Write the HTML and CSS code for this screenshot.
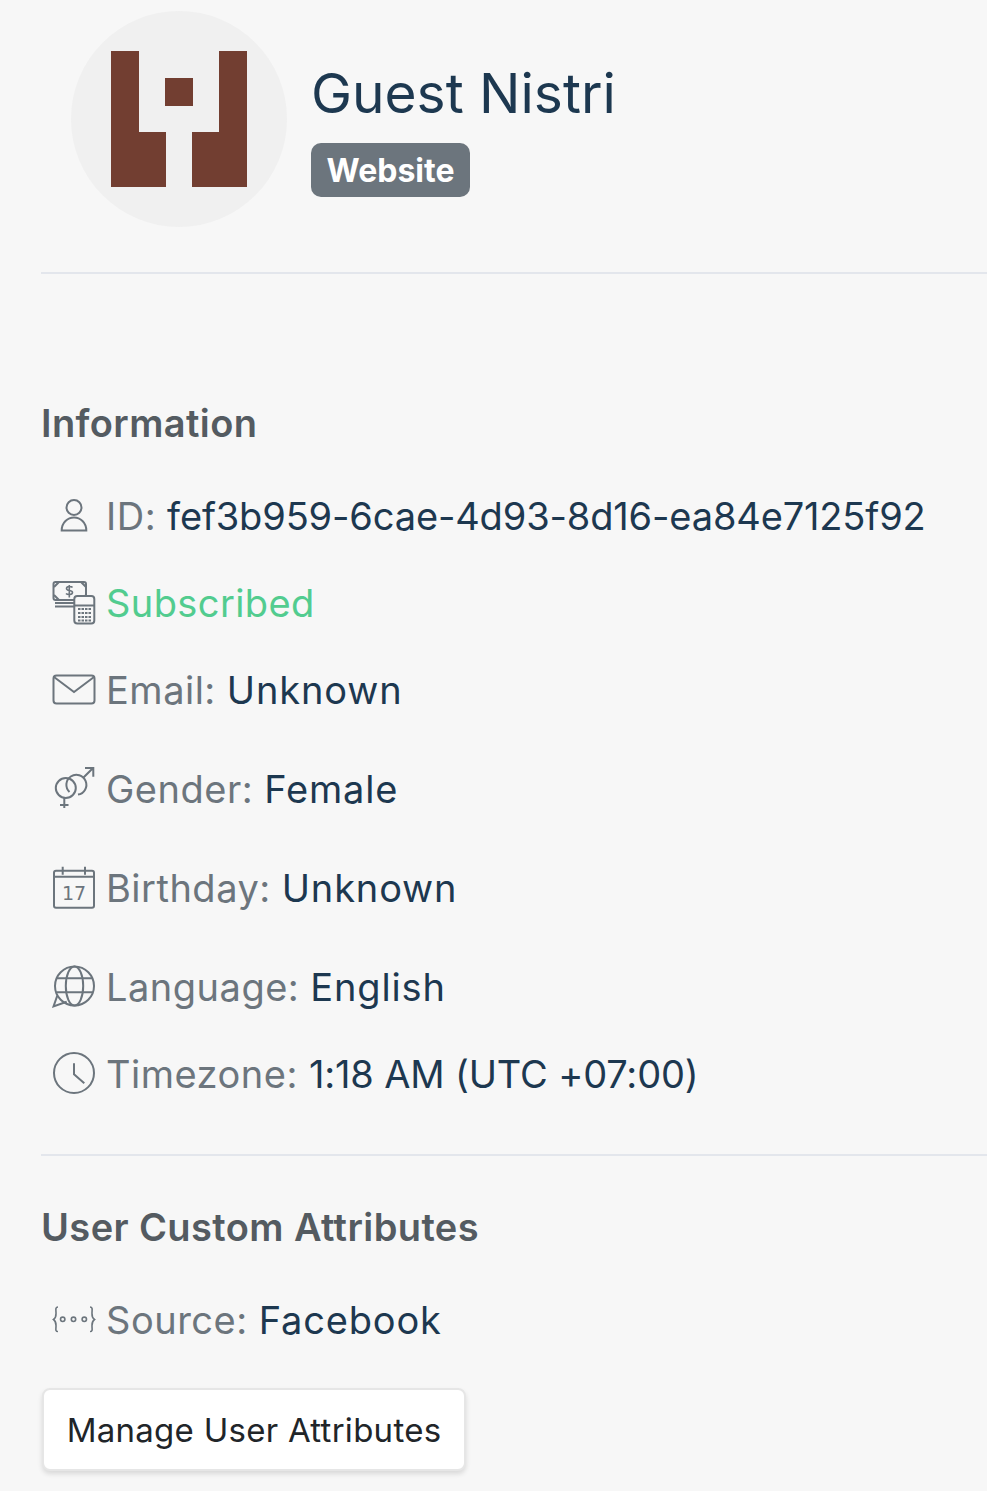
FILE: index.html
```html
<!DOCTYPE html>
<html lang="en">
<head>
<meta charset="utf-8">
<title>Guest Nistri</title>
<link rel="stylesheet" href="styles.css">
</head>
<body>
<header class="profile">
  <svg class="avatar" viewBox="0 0 216 216" aria-hidden="true">
    <circle cx="108" cy="108" r="108" fill="#f0f0f0"/>
    <path fill="#723e31" d="M40 40h28v81h27v55H40zM148 40h28v136h-55v-55h27zM94 67h28v28H94z"/>
  </svg>
  <div class="identity">
    <h1 class="name">Guest Nistri</h1>
    <span class="badge">Website</span>
  </div>
</header>

<section class="info">
  <h2 class="heading">Information</h2>
  <ul class="rows">
    <li class="row">
      <svg class="icon" viewBox="0 0 44 44"><circle cx="22" cy="13.500" r="7.500"/><path d="M9.700 36.500c0-8 6-13 12.300-13s12.300 5 12.300 13z"/></svg>
      <span class="label">ID:</span><span class="value numeric">fef3b959-6cae-4d93-8d16-ea84e7125f92</span>
    </li>
    <li class="row">
      <svg class="icon" viewBox="0 0 44 44"><rect x="1.500" y="1" width="32.500" height="18" rx="2"/><path d="M2 6l5-5M2 14l5 5M29 1l5 5M29 19l5-5M3 22h19M3 25.500h19"/><path class="thin" d="M20.500 6.500c-1-1.500-6-1.500-6 1 0 3 6 1 6 4 0 2.500-5 2.500-6.500 1M17.300 4v12.500"/><rect x="22.300" y="15" width="20" height="27.500" rx="3" class="paper"/><path d="M22.300 24.500h20"/><path class="dots" d="M26 28h13M26 32h13M26 36h13M26 39.500h13"/></svg>
      <span class="subscribed">Subscribed</span>
    </li>
    <li class="row">
      <svg class="icon" viewBox="0 0 44 44"><rect x="1.500" y="7.500" width="41" height="28" rx="3"/><path d="M2 9l20 15L42 9"/></svg>
      <span class="label">Email:</span><span class="value">Unknown</span>
    </li>
    <li class="row row-spaced">
      <svg class="icon" viewBox="0 0 44 44"><circle cx="13.800" cy="21" r="10"/><path d="M12.300 31v10M8 38h8.500"/><path d="M26 27.600A10 10 0 1 0 17.500 25"/><path d="M31.500 10.500L41.300 .7M33 1h8.300v8.700"/></svg>
      <span class="label">Gender:</span><span class="value">Female</span>
    </li>
    <li class="row row-spaced">
      <svg class="icon" viewBox="0 0 44 44"><rect x="2" y="4.700" width="40" height="37" rx="2"/><path d="M2 10.700h40M10.700 .7v8M33 .7v8"/><text class="date" x="22" y="34" text-anchor="middle">17</text></svg>
      <span class="label">Birthday:</span><span class="value">Unknown</span>
    </li>
    <li class="row row-spaced">
      <svg class="icon" viewBox="0 0 44 44"><circle cx="22.500" cy="21" r="19.500"/><ellipse cx="22.500" cy="21" rx="8.700" ry="19.500"/><path d="M4.500 13.300h36M4.500 27.300h36M5.300 30.700L1.500 41.500l13.200-4.800"/></svg>
      <span class="label">Language:</span><span class="value">English</span>
    </li>
    <li class="row">
      <svg class="icon" viewBox="0 0 44 44"><circle cx="22" cy="21" r="20"/><path d="M22 11.300v11l10.300 9"/></svg>
      <span class="label">Timezone:</span><span class="value numeric">1:18 AM (UTC +07:00)</span>
    </li>
  </ul>
</section>

<section class="custom">
  <h2 class="heading">User Custom Attributes</h2>
  <div class="row row-source">
    <svg class="icon" viewBox="0 0 44 44"><path class="thin" d="M6 9c-3 0-2 3-2 5.500s.5 5-2.500 7c3 2 2.500 4.500 2.500 7S3 33.500 6 33.500M38 9c3 0 2 3 2 5.500s-.5 5 2.500 7c-3 2-2.500 4.500-2.500 7s1 5-2 5"/><circle class="thin" cx="10.700" cy="21.300" r="2.200"/><circle class="thin" cx="21.500" cy="21.300" r="2.200"/><circle class="thin" cx="32.300" cy="21.300" r="2.200"/></svg>
    <span class="label">Source:</span><span class="value">Facebook</span>
  </div>
  <button class="manage" type="button">Manage User Attributes</button>
</section>
</body>
</html>
```

FILE: styles.css
```css
* { box-sizing: border-box; }
html, body { margin: 0; padding: 0; }
body {
  height: 1491px;
  overflow: hidden;
  background: #f7f7f7;
  padding-left: 41px;
  font-family: "Inter", "Lato", sans-serif;
  color: #1d3850;
}
.profile {
  display: flex;
  align-items: flex-start;
  height: 274px;
  padding: 11px 0 0 30px;
  border-bottom: 2px solid #e3e6ec;
}
.avatar { width: 216px; height: 216px; flex: none; }
.identity {
  display: flex;
  flex-direction: column;
  align-items: flex-start;
  margin-left: 24px;
  padding-top: 47px;
}
.name {
  margin: 0;
  font-size: 55px;
  line-height: 70px;
  font-weight: 400;
  color: #1d3850;
}
.badge {
  margin-top: 15px;
  width: 159px;
  height: 54px;
  line-height: 55px;
  text-align: center;
  border-radius: 10px;
  background: #6c757d;
  color: #fff;
  font-size: 32px;
  font-weight: 700;
}
.heading {
  margin: 0;
  font-size: 38px;
  line-height: 46px;
  font-weight: 600;
  letter-spacing: .4px;
  color: #545b61;
}
.info {
  height: 882px;
  padding-top: 126px;
  border-bottom: 2px solid #e3e6ec;
}
.rows { list-style: none; margin: 45px 0 0; padding: 0; }
.row {
  display: flex;
  align-items: center;
  height: 50px;
  padding-left: 11px;
  font-size: 38px;
  white-space: pre;
}
.row + .row { margin-top: 37px; }
.row + .row-spaced { margin-top: 49px; }
.row-source { margin-top: 45px; }
.icon {
  width: 44px;
  height: 44px;
  margin-right: 10px;
  flex: none;
  fill: none;
  stroke: #6c757d;
  stroke-width: 2;
}
.icon .thin { stroke-width: 1.600; }
.icon .paper { fill: #f7f7f7; }
.icon .dots { stroke-width: 2; stroke-dasharray: 2.500 1; }
.icon .date { font-family: "DejaVu Sans", sans-serif; font-size: 19px; fill: #6c757d; stroke: none; }
.label { color: #6c757d; margin-right: 11px; letter-spacing: .5px; }
.value { color: #1d3850; letter-spacing: .85px; }
.value.numeric { letter-spacing: -.15px; }
.subscribed { color: #52cc8f; letter-spacing: .4px; }
.custom { padding-top: 48px; }
.manage {
  display: block;
  margin: 43px 0 0 1px;
  width: 424px;
  height: 83px;
  padding: 0;
  background: #fff;
  border: 2px solid #e6e6e6;
  border-radius: 8px;
  box-shadow: 0 3px 5px rgba(0, 0, 0, .12);
  font-family: inherit;
  font-size: 33px;
  letter-spacing: .27px;
  color: #212529;
}
```
